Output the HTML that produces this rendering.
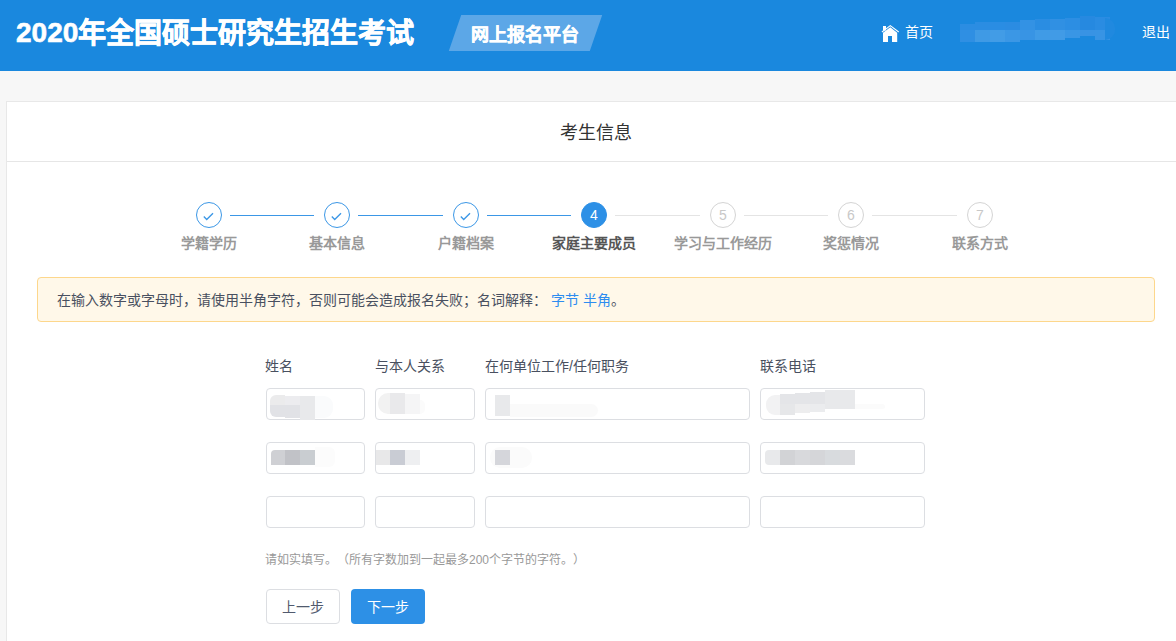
<!DOCTYPE html>
<html lang="zh-CN">
<head>
<meta charset="utf-8">
<style>
*{margin:0;padding:0;box-sizing:border-box;}
html,body{width:1176px;height:641px;overflow:hidden;}
body{text-spacing-trim:space-all;background:#f7f7f7;font-family:"Liberation Sans",sans-serif;color:#333;position:relative;}
.abs{position:absolute;}
#hdr{left:0;top:0;width:1176px;height:71px;background:#1a88de;}
#hdr .title{left:16px;top:14px;font-size:28px;font-weight:bold;color:#fff;line-height:40px;white-space:nowrap;-webkit-text-stroke:0.6px #fff;}
#hdr .title span{position:relative;top:-1px;}
#badge{left:455px;top:15px;width:141px;height:36px;background:#5ca7e7;transform:skewX(-19deg);}
#badgeTxt{left:471px;top:17px;height:36px;line-height:36px;font-size:18px;font-weight:bold;color:#fff;white-space:nowrap;-webkit-text-stroke:0.4px #fff;}
.nav{color:#fff;font-size:14px;line-height:20px;white-space:nowrap;}
#card{left:6px;top:101px;width:1179px;height:560px;background:#fff;border:1px solid #e8e8e8;}
#cardTitle{left:0;top:0;width:1177px;height:60px;line-height:63px;text-align:center;font-size:18px;color:#333;border-bottom:1px solid #e6e6e6;}
.circ{width:26px;height:26px;border-radius:50%;border:1px solid #3b97e6;background:#fff;}
.circ.act{background:#2d90e6;border-color:#2d90e6;color:#fff;font-size:14px;text-align:center;line-height:24px;}
.circ.todo{border-color:#d4d4d4;color:#c8c8c8;font-size:14px;text-align:center;line-height:24px;}
.line{height:1px;background:#3b97e6;top:215px;}
.line.grey{background:#e4e4e4;}
.slabel{top:233px;width:128px;text-align:center;font-size:14px;font-weight:bold;color:#999;line-height:20px;white-space:nowrap;}
.slabel.act{color:#555;}
#alert{left:37px;top:277px;width:1118px;height:45px;background:#fff8e9;border:1px solid #fdd78c;border-radius:4px;}
#alertTxt{left:57px;top:290px;font-size:14px;line-height:20px;color:#495060;white-space:nowrap;}
#alertTxt a{color:#2d8cf0;text-decoration:none;}
.flabel{top:355.5px;font-size:14px;line-height:20px;color:#495060;white-space:nowrap;}
.inp{height:32px;border:1px solid #dcdee2;border-radius:4px;background:#fff;}
.blk{position:absolute;}
#hint{left:265px;top:551px;font-size:12px;line-height:18px;color:#999;white-space:nowrap;}
.btn{top:589px;width:74px;height:35px;border-radius:4px;font-size:14px;line-height:35px;text-align:center;}
</style>
</head>
<body>
<div id="hdr" class="abs">
  <div class="abs title"><span>2020</span>年全国硕士研究生招生考试</div>
</div>
<div id="badge" class="abs"></div>
<div id="badgeTxt" class="abs">网上报名平台</div>

<svg class="abs" style="left:879px;top:22px" width="22" height="22" viewBox="0 0 22 22">
  <path d="M2.9 10 L11.3 3.6 L19.7 10" fill="none" stroke="#fff" stroke-width="1.1"/>
  <rect x="4" y="4" width="3" height="4.5" fill="#fff"/>
  <path d="M4 10.8 L11.3 5.2 L18.2 10.8 V20 H13 V14 H9 V20 H4 Z" fill="#fff"/>
</svg>
<div class="abs nav" style="left:905px;top:22px;">首页</div>
<!-- header mosaic -->
<div class="abs" style="left:960px;top:24px;width:15px;height:6px;background:#2b8de2;"></div>
<div class="abs" style="left:960px;top:30px;width:15px;height:12px;background:#2f8fe3;"></div>
<div class="abs" style="left:975px;top:22px;width:15px;height:8px;background:#2b8de2;"></div>
<div class="abs" style="left:975px;top:30px;width:15px;height:12px;background:#3f9ae5;"></div>
<div class="abs" style="left:990px;top:22px;width:15px;height:8px;background:#2a8de3;"></div>
<div class="abs" style="left:990px;top:30px;width:15px;height:12px;background:#429ce6;"></div>
<div class="abs" style="left:1005px;top:22px;width:15px;height:8px;background:#2b8ce2;"></div>
<div class="abs" style="left:1005px;top:30px;width:15px;height:12px;background:#3b97e5;"></div>
<div class="abs" style="left:1020px;top:20px;width:15px;height:10px;background:#3392e4;"></div>
<div class="abs" style="left:1020px;top:30px;width:15px;height:10px;background:#3894e4;"></div>
<div class="abs" style="left:1035px;top:19px;width:15px;height:11px;background:#2a8de2;"></div>
<div class="abs" style="left:1035px;top:30px;width:15px;height:10px;background:#409be6;"></div>
<div class="abs" style="left:1050px;top:19px;width:15px;height:11px;background:#3090e3;"></div>
<div class="abs" style="left:1050px;top:30px;width:15px;height:10px;background:#419be6;"></div>
<div class="abs" style="left:1065px;top:18px;width:15px;height:12px;background:#2c8ee3;"></div>
<div class="abs" style="left:1065px;top:30px;width:15px;height:8px;background:#3996e5;"></div>
<div class="abs" style="left:1080px;top:16px;width:15px;height:14px;background:#2689e0;"></div>
<div class="abs" style="left:1080px;top:30px;width:15px;height:6px;background:#3893e4;"></div>
<div class="abs" style="left:1095px;top:17px;width:15px;height:13px;background:#2a8ce2;"></div>
<div class="abs" style="left:1095px;top:30px;width:15px;height:10px;background:#3894e4;"></div>
<div class="abs" style="left:1105px;top:18px;width:10px;height:22px;border-radius:0 10px 10px 0;background:#2089df;"></div>
<div class="abs nav" style="left:1142px;top:22px;">退出</div>

<div id="card" class="abs">
  <div id="cardTitle" class="abs">考生信息</div>
</div>

<!-- stepper -->
<div class="abs circ" style="left:196px;top:202px;"></div>
<div class="abs circ" style="left:324px;top:202px;"></div>
<div class="abs circ" style="left:453px;top:202px;"></div>
<div class="abs circ act" style="left:581px;top:202px;">4</div>
<div class="abs circ todo" style="left:710px;top:202px;">5</div>
<div class="abs circ todo" style="left:838px;top:202px;">6</div>
<div class="abs circ todo" style="left:967px;top:202px;">7</div>
<svg class="abs" style="left:196px;top:202px" width="26" height="26"><path d="M7.8 14.6 L10.7 17.5 L17 11.2" fill="none" stroke="#3b97e6" stroke-width="1.35"/></svg>
<svg class="abs" style="left:324px;top:202px" width="26" height="26"><path d="M7.8 14.6 L10.7 17.5 L17 11.2" fill="none" stroke="#3b97e6" stroke-width="1.35"/></svg>
<svg class="abs" style="left:453px;top:202px" width="26" height="26"><path d="M7.8 14.6 L10.7 17.5 L17 11.2" fill="none" stroke="#3b97e6" stroke-width="1.35"/></svg>

<div class="abs line" style="left:230px;width:84px;"></div>
<div class="abs line" style="left:358px;width:85px;"></div>
<div class="abs line" style="left:487px;width:84px;"></div>
<div class="abs line grey" style="left:615px;width:85px;"></div>
<div class="abs line grey" style="left:744px;width:84px;"></div>
<div class="abs line grey" style="left:872px;width:85px;"></div>

<div class="abs slabel" style="left:145px;">学籍学历</div>
<div class="abs slabel" style="left:273px;">基本信息</div>
<div class="abs slabel" style="left:402px;">户籍档案</div>
<div class="abs slabel act" style="left:530px;">家庭主要成员</div>
<div class="abs slabel" style="left:659px;">学习与工作经历</div>
<div class="abs slabel" style="left:787px;">奖惩情况</div>
<div class="abs slabel" style="left:916px;">联系方式</div>

<div id="alert" class="abs"></div>
<div id="alertTxt" class="abs">在输入数字或字母时，请使用半角字符，否则可能会造成报名失败；名词解释： <a>字节</a> <a>半角</a>。</div>

<div class="abs flabel" style="left:265px;">姓名</div>
<div class="abs flabel" style="left:375px;">与本人关系</div>
<div class="abs flabel" style="left:485px;">在何单位工作/任何职务</div>
<div class="abs flabel" style="left:760px;">联系电话</div>

<!-- rows -->
<div class="abs inp" style="left:266px;top:388px;width:99px;"></div>
<div class="abs inp" style="left:375px;top:388px;width:100px;"></div>
<div class="abs inp" style="left:485px;top:388px;width:265px;"></div>
<div class="abs inp" style="left:760px;top:388px;width:165px;"></div>
<div class="abs inp" style="left:266px;top:442px;width:99px;"></div>
<div class="abs inp" style="left:375px;top:442px;width:100px;"></div>
<div class="abs inp" style="left:485px;top:442px;width:265px;"></div>
<div class="abs inp" style="left:760px;top:442px;width:165px;"></div>
<div class="abs inp" style="left:266px;top:496px;width:99px;"></div>
<div class="abs inp" style="left:375px;top:496px;width:100px;"></div>
<div class="abs inp" style="left:485px;top:496px;width:265px;"></div>
<div class="abs inp" style="left:760px;top:496px;width:165px;"></div>

<!-- mosaic -->
<div class="abs" style="left:315px;top:396px;width:18px;height:22px;background:#fafbfc;border-radius:0 9px 9px 0;"></div>
<div class="abs" style="left:420px;top:400px;width:5px;height:14px;background:#fbfbfb;border-radius:0 6px 6px 0;"></div>
<div class="abs" style="left:510px;top:404px;width:88px;height:13px;background:#fafafa;border-radius:0 7px 7px 0;"></div>
<div class="abs" style="left:855px;top:404px;width:30px;height:5px;background:#fbfbfb;border-radius:0 4px 4px 0;"></div>
<div class="abs" style="left:315px;top:447px;width:20px;height:20px;background:#fcfcfc;border-radius:0 6px 6px 0;"></div>
<div class="abs" style="left:490px;top:447px;width:42px;height:21px;background:#fbfbfb;border-radius:10px;"></div>
<div class="abs" style="left:270px;top:395px;width:15px;height:10px;background:#ebebec;border-radius:6px 0 0 0;"></div>
<div class="abs" style="left:285px;top:396px;width:15px;height:9px;background:#ececef;"></div>
<div class="abs" style="left:270px;top:405px;width:15px;height:12px;background:#e1e2e6;border-radius:0 0 0 6px;"></div>
<div class="abs" style="left:285px;top:405px;width:15px;height:13px;background:#e1e2e6;"></div>
<div class="abs" style="left:300px;top:396px;width:15px;height:24px;background:#e8e9eb;"></div>
<div class="abs" style="left:378px;top:393px;width:12px;height:21px;background:#f2f2f2;border-radius:10px 0 0 10px;"></div>
<div class="abs" style="left:390px;top:393px;width:15px;height:21px;background:#e9e9eb;"></div>
<div class="abs" style="left:405px;top:394px;width:15px;height:20px;background:#f5f5f6;border-radius:0 0 0 0;"></div>
<div class="abs" style="left:495px;top:395px;width:15px;height:21px;background:#e8e9eb;"></div>
<div class="abs" style="left:766px;top:395px;width:14px;height:20px;background:#f2f2f3;border-radius:9px 0 0 9px;"></div>
<div class="abs" style="left:780px;top:394px;width:15px;height:10px;background:#e4e5e8;"></div>
<div class="abs" style="left:780px;top:404px;width:15px;height:11px;background:#e6e7e9;"></div>
<div class="abs" style="left:795px;top:393px;width:15px;height:11px;background:#e4e5e8;"></div>
<div class="abs" style="left:795px;top:404px;width:15px;height:9px;background:#ededee;"></div>
<div class="abs" style="left:810px;top:392px;width:15px;height:12px;background:#e4e5e8;"></div>
<div class="abs" style="left:810px;top:404px;width:15px;height:8px;background:#ebecee;"></div>
<div class="abs" style="left:825px;top:390px;width:30px;height:19px;background:#e8e9eb;"></div>
<div class="abs" style="left:271px;top:450px;width:14px;height:15px;background:#cfd0d4;border-radius:4px 0 0 0;"></div>
<div class="abs" style="left:285px;top:450px;width:15px;height:15px;background:#c1c2c7;"></div>
<div class="abs" style="left:300px;top:450px;width:15px;height:15px;background:#c9cdd1;"></div>
<div class="abs" style="left:376px;top:450px;width:14px;height:15px;background:#e8e8e9;"></div>
<div class="abs" style="left:390px;top:450px;width:15px;height:15px;background:#c9ccd4;"></div>
<div class="abs" style="left:405px;top:450px;width:15px;height:15px;background:#eeeff1;"></div>
<div class="abs" style="left:495px;top:450px;width:15px;height:15px;background:#d5d6db;"></div>
<div class="abs" style="left:765px;top:450px;width:15px;height:15px;background:#e8e9eb;border-radius:4px 0 0 4px;"></div>
<div class="abs" style="left:780px;top:450px;width:15px;height:15px;background:#d2d3d6;"></div>
<div class="abs" style="left:795px;top:450px;width:15px;height:15px;background:#d8d9dc;"></div>
<div class="abs" style="left:810px;top:450px;width:15px;height:15px;background:#d5d6d9;"></div>
<div class="abs" style="left:825px;top:450px;width:15px;height:15px;background:#d8dbde;"></div>
<div class="abs" style="left:840px;top:450px;width:15px;height:15px;background:#dadbde;"></div>

<div id="hint" class="abs">请如实填写。（所有字数加到一起最多200个字节的字符。）</div>

<div class="abs btn" style="left:266px;border:1px solid #dcdee2;background:#fff;color:#515a6e;">上一步</div>
<div class="abs btn" style="left:351px;background:#2d90e6;color:#fff;line-height:37px;">下一步</div>
</body>
</html>
